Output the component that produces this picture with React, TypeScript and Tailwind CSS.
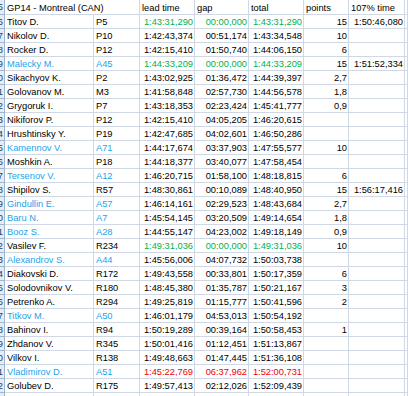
import { type ReactNode } from 'react';

type Tone = 'black' | 'blue' | 'green' | 'red';

interface Row {
  name: string;
  code: string;
  lead: string;
  gap: string;
  total: string;
  points?: string;
  pct?: string;
  nameTone?: Tone;
  timeTone?: Tone;
}

const rows: Row[] = [
  { name: 'Titov D.', code: 'P5', lead: '1:43:31,290', gap: '00:00,000', total: '1:43:31,290', points: '15', pct: '1:50:46,080', timeTone: 'green' },
  { name: 'Nikolov D.', code: 'P10', lead: '1:42:43,374', gap: '00:51,174', total: '1:43:34,548', points: '10' },
  { name: 'Rocker D.', code: 'P12', lead: '1:42:15,410', gap: '01:50,740', total: '1:44:06,150', points: '6' },
  { name: 'Malecky M.', code: 'A45', lead: '1:44:33,209', gap: '00:00,000', total: '1:44:33,209', points: '15', pct: '1:51:52,334', nameTone: 'blue', timeTone: 'green' },
  { name: 'Sikachyov K.', code: 'P2', lead: '1:43:02,925', gap: '01:36,472', total: '1:44:39,397', points: '2,7' },
  { name: 'Golovanov M.', code: 'M3', lead: '1:41:58,848', gap: '02:57,730', total: '1:44:56,578', points: '1,8' },
  { name: 'Grygoruk I.', code: 'P7', lead: '1:43:18,353', gap: '02:23,424', total: '1:45:41,777', points: '0,9' },
  { name: 'Nikiforov P.', code: 'P12', lead: '1:42:15,410', gap: '04:05,205', total: '1:46:20,615' },
  { name: 'Hrushtinsky Y.', code: 'P19', lead: '1:42:47,685', gap: '04:02,601', total: '1:46:50,286' },
  { name: 'Kamennov V.', code: 'A71', lead: '1:44:17,674', gap: '03:37,903', total: '1:47:55,577', points: '10', nameTone: 'blue' },
  { name: 'Moshkin A.', code: 'P18', lead: '1:44:18,377', gap: '03:40,077', total: '1:47:58,454' },
  { name: 'Tersenov V.', code: 'A12', lead: '1:46:20,715', gap: '01:58,100', total: '1:48:18,815', points: '6', nameTone: 'blue' },
  { name: 'Shipilov S.', code: 'R57', lead: '1:48:30,861', gap: '00:10,089', total: '1:48:40,950', points: '15', pct: '1:56:17,416' },
  { name: 'Gindullin E.', code: 'A57', lead: '1:46:14,161', gap: '02:29,523', total: '1:48:43,684', points: '2,7', nameTone: 'blue' },
  { name: 'Baru N.', code: 'A7', lead: '1:45:54,145', gap: '03:20,509', total: '1:49:14,654', points: '1,8', nameTone: 'blue' },
  { name: 'Booz S.', code: 'A28', lead: '1:44:55,147', gap: '04:23,002', total: '1:49:18,149', points: '0,9', nameTone: 'blue' },
  { name: 'Vasilev F.', code: 'R234', lead: '1:49:31,036', gap: '00:00,000', total: '1:49:31,036', points: '10', timeTone: 'green' },
  { name: 'Alexandrov S.', code: 'A44', lead: '1:45:56,006', gap: '04:07,732', total: '1:50:03,738', nameTone: 'blue' },
  { name: 'Diakovski D.', code: 'R172', lead: '1:49:43,558', gap: '00:33,801', total: '1:50:17,359', points: '6' },
  { name: 'Solodovnikov V.', code: 'R180', lead: '1:48:45,380', gap: '01:35,787', total: '1:50:21,167', points: '3' },
  { name: 'Petrenko A.', code: 'R294', lead: '1:49:25,819', gap: '01:15,777', total: '1:50:41,596', points: '2' },
  { name: 'Titkov M.', code: 'A50', lead: '1:46:01,179', gap: '04:53,013', total: '1:50:54,192', nameTone: 'blue' },
  { name: 'Bahinov I.', code: 'R94', lead: '1:50:19,289', gap: '00:39,164', total: '1:50:58,453', points: '1' },
  { name: 'Zhdanov V.', code: 'R345', lead: '1:50:01,416', gap: '01:12,451', total: '1:51:13,867' },
  { name: 'Vilkov I.', code: 'R138', lead: '1:49:48,663', gap: '01:47,445', total: '1:51:36,108' },
  { name: 'Vladimirov D.', code: 'A51', lead: '1:45:22,769', gap: '06:37,962', total: '1:52:00,731', nameTone: 'blue', timeTone: 'red' },
  { name: 'Golubev D.', code: 'R175', lead: '1:49:57,413', gap: '02:12,026', total: '1:52:09,439' },
];

const toneClass: Record<Tone, string> = {
  black: 'text-black',
  blue: 'text-[#1aa5ea]',
  green: 'text-[#00b050]',
  red: 'text-[#ee0000]',
};

const cols = 'grid grid-cols-[5px_89px_46px_55px_54px_55px_45px_56px_1fr]';

function Cell({ children, right, tone = 'black', className = '' }: { children?: ReactNode; right?: boolean; tone?: Tone; className?: string }) {
  return (
    <div
      className={`overflow-hidden whitespace-nowrap border-r border-b border-[#d0d7e5] leading-[13px] pt-[1px] ${
        right ? 'pr-[1px] text-right' : 'pl-[2px]'
      } ${toneClass[tone]} ${className}`}
    >
      {children}
    </div>
  );
}

function RowHead({ n }: { n: number }) {
  return (
    <div className="overflow-hidden border-r border-b border-[#9eb6ce] bg-[#e4ecf7]">
      <div className="-ml-[25px] w-[30px] pr-[2px] pt-[1px] text-right leading-[13px] text-[#27415f]">{n}</div>
    </div>
  );
}

export default function App() {
  return (
    <div className="h-[396px] w-[408px] overflow-hidden bg-white font-['Liberation_Sans',Arial,sans-serif] text-[9.3px]">
      {/* header row */}
      <div className={`${cols} h-[15px]`}>
        <RowHead n={65} />
        <Cell className="col-span-2 pt-[2px]">GP14 - Montreal (CAN)</Cell>
        <Cell className="pt-[2px]">lead time</Cell>
        <Cell className="pt-[2px]">gap</Cell>
        <Cell className="pt-[2px]">total</Cell>
        <Cell className="pt-[2px]">points</Cell>
        <Cell className="pt-[2px]">107% time</Cell>
        <Cell />
      </div>

      {rows.map((r, i) => {
        const nt = r.nameTone ?? 'black';
        const tt = r.timeTone ?? 'black';
        return (
          <div key={r.name} className={`${cols} h-[14px]`}>
            <RowHead n={66 + i} />
            <Cell tone={nt}>{r.name}</Cell>
            <Cell tone={nt}>{r.code}</Cell>
            <Cell right tone={tt}>{r.lead}</Cell>
            <Cell right tone={tt}>{r.gap}</Cell>
            <Cell right tone={tt}>{r.total}</Cell>
            <Cell right>{r.points}</Cell>
            <Cell right>{r.pct}</Cell>
            <Cell />
          </div>
        );
      })}

      {/* partially visible next row */}
      <div className={`${cols} h-[14px]`}>
        <RowHead n={93} />
        <Cell />
        <Cell />
        <Cell />
        <Cell />
        <Cell />
        <Cell />
        <Cell />
        <Cell />
      </div>
    </div>
  );
}
